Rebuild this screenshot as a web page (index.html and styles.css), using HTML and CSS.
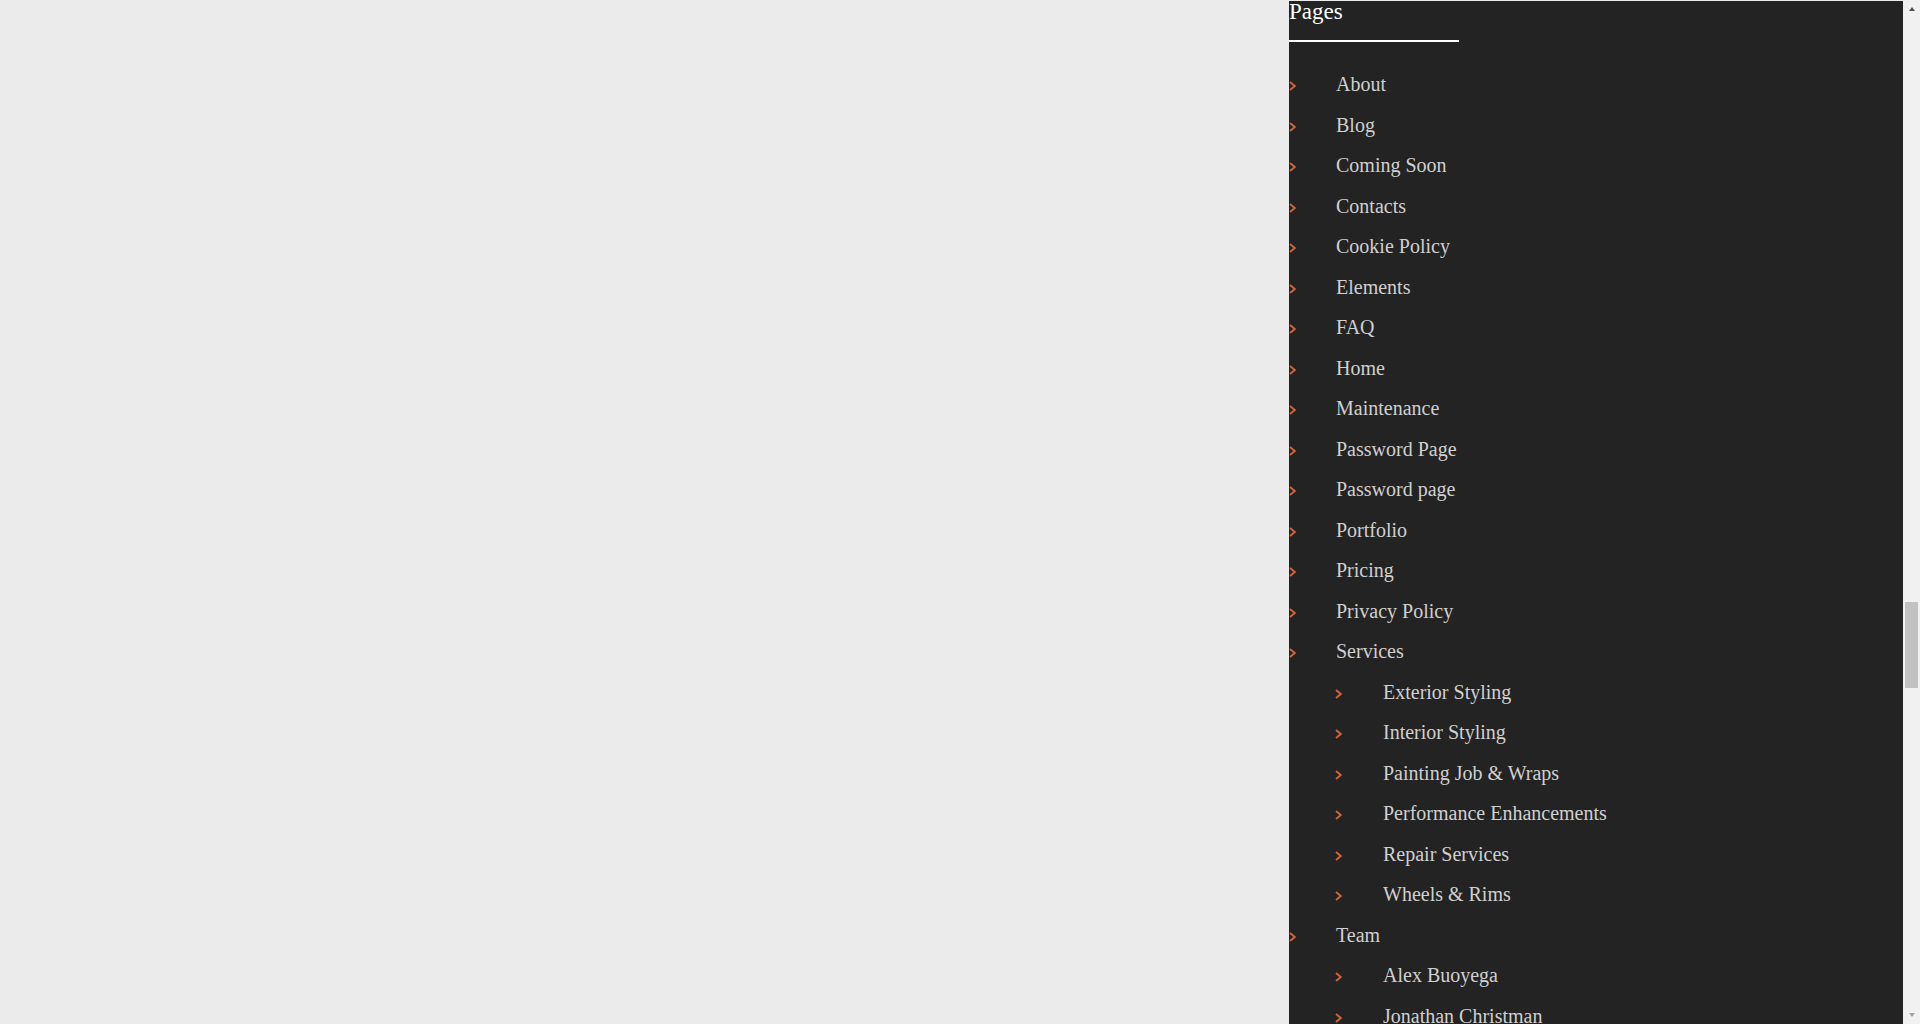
FILE: index.html
```html
<!DOCTYPE html>
<html lang="en">
<head>
<meta charset="utf-8">
<title>Pages</title>
<link rel="stylesheet" href="styles.css">
</head>
<body>
<div class="page">
  <div class="blank"></div>
  <aside class="panel">
    <h2 class="title">Pages</h2>
    <ul class="menu">
      <li><span class="mark"><svg viewBox="0 0 7 10" width="7" height="10"><polyline points="1,1 5.8,5 1,9"/></svg></span><a href="#">About</a></li>
      <li><span class="mark"><svg viewBox="0 0 7 10" width="7" height="10"><polyline points="1,1 5.8,5 1,9"/></svg></span><a href="#">Blog</a></li>
      <li><span class="mark"><svg viewBox="0 0 7 10" width="7" height="10"><polyline points="1,1 5.8,5 1,9"/></svg></span><a href="#">Coming Soon</a></li>
      <li><span class="mark"><svg viewBox="0 0 7 10" width="7" height="10"><polyline points="1,1 5.8,5 1,9"/></svg></span><a href="#">Contacts</a></li>
      <li><span class="mark"><svg viewBox="0 0 7 10" width="7" height="10"><polyline points="1,1 5.8,5 1,9"/></svg></span><a href="#">Cookie Policy</a></li>
      <li><span class="mark"><svg viewBox="0 0 7 10" width="7" height="10"><polyline points="1,1 5.8,5 1,9"/></svg></span><a href="#">Elements</a></li>
      <li><span class="mark"><svg viewBox="0 0 7 10" width="7" height="10"><polyline points="1,1 5.8,5 1,9"/></svg></span><a href="#">FAQ</a></li>
      <li><span class="mark"><svg viewBox="0 0 7 10" width="7" height="10"><polyline points="1,1 5.8,5 1,9"/></svg></span><a href="#">Home</a></li>
      <li><span class="mark"><svg viewBox="0 0 7 10" width="7" height="10"><polyline points="1,1 5.8,5 1,9"/></svg></span><a href="#">Maintenance</a></li>
      <li><span class="mark"><svg viewBox="0 0 7 10" width="7" height="10"><polyline points="1,1 5.8,5 1,9"/></svg></span><a href="#">Password Page</a></li>
      <li><span class="mark"><svg viewBox="0 0 7 10" width="7" height="10"><polyline points="1,1 5.8,5 1,9"/></svg></span><a href="#">Password page</a></li>
      <li><span class="mark"><svg viewBox="0 0 7 10" width="7" height="10"><polyline points="1,1 5.8,5 1,9"/></svg></span><a href="#">Portfolio</a></li>
      <li><span class="mark"><svg viewBox="0 0 7 10" width="7" height="10"><polyline points="1,1 5.8,5 1,9"/></svg></span><a href="#">Pricing</a></li>
      <li><span class="mark"><svg viewBox="0 0 7 10" width="7" height="10"><polyline points="1,1 5.8,5 1,9"/></svg></span><a href="#">Privacy Policy</a></li>
      <li><span class="mark"><svg viewBox="0 0 7 10" width="7" height="10"><polyline points="1,1 5.8,5 1,9"/></svg></span><a href="#">Services</a>
        <ul class="submenu">
          <li><span class="mark"><svg viewBox="0 0 7 10" width="7" height="10"><polyline points="1,1 5.8,5 1,9"/></svg></span><a href="#">Exterior Styling</a></li>
          <li><span class="mark"><svg viewBox="0 0 7 10" width="7" height="10"><polyline points="1,1 5.8,5 1,9"/></svg></span><a href="#">Interior Styling</a></li>
          <li><span class="mark"><svg viewBox="0 0 7 10" width="7" height="10"><polyline points="1,1 5.8,5 1,9"/></svg></span><a href="#">Painting Job &amp; Wraps</a></li>
          <li><span class="mark"><svg viewBox="0 0 7 10" width="7" height="10"><polyline points="1,1 5.8,5 1,9"/></svg></span><a href="#">Performance Enhancements</a></li>
          <li><span class="mark"><svg viewBox="0 0 7 10" width="7" height="10"><polyline points="1,1 5.8,5 1,9"/></svg></span><a href="#">Repair Services</a></li>
          <li><span class="mark"><svg viewBox="0 0 7 10" width="7" height="10"><polyline points="1,1 5.8,5 1,9"/></svg></span><a href="#">Wheels &amp; Rims</a></li>
        </ul>
      </li>
      <li><span class="mark"><svg viewBox="0 0 7 10" width="7" height="10"><polyline points="1,1 5.8,5 1,9"/></svg></span><a href="#">Team</a>
        <ul class="submenu">
          <li><span class="mark"><svg viewBox="0 0 7 10" width="7" height="10"><polyline points="1,1 5.8,5 1,9"/></svg></span><a href="#">Alex Buoyega</a></li>
          <li><span class="mark"><svg viewBox="0 0 7 10" width="7" height="10"><polyline points="1,1 5.8,5 1,9"/></svg></span><a href="#">Jonathan Christman</a></li>
        </ul>
      </li>
    </ul>
  </aside>
  <div class="scrollbar">
    <span class="arrow arrow-up"></span>
    <div class="track"><div class="thumb"></div></div>
    <span class="arrow arrow-down"></span>
  </div>
</div>
</body>
</html>
```

FILE: styles.css
```css
html, body {
  margin: 0;
  padding: 0;
  height: 100%;
  overflow: hidden;
  background: #ebebeb;
}

.page {
  display: flex;
  height: 1024px;
  font-family: "Liberation Serif", "Times New Roman", serif;
}

.blank {
  flex: 0 0 1289px;
  background: #ebebeb;
}

.panel {
  flex: 1 1 auto;
  margin-top: 1px;
  background: #232323;
  overflow: hidden;
}

.title {
  margin: 0;
  width: 170px;
  font-size: 23px;
  line-height: 22px;
  font-weight: normal;
  color: #ffffff;
  padding-bottom: 17px;
  border-bottom: 2px solid #ffffff;
}

.menu {
  list-style: none;
  margin: 22px 0 0 0;
  padding: 0;
}

.submenu {
  list-style: none;
  margin: 0;
  padding: 0 0 0 46px;
}

.menu li {
  font-size: 20px;
  line-height: 40.5px;
  color: #d0d0d0;
}

.menu a {
  color: #d0d0d0;
  text-decoration: none;
}

.mark {
  display: inline-block;
  width: 47px;
}

.submenu .mark {
  width: 48px;
}

.mark svg {
  display: inline-block;
  vertical-align: 0;
}

.mark polyline {
  fill: none;
  stroke: #d2643a;
  stroke-width: 1.9;
}

.scrollbar {
  flex: 0 0 17px;
  background: #f1f1f1;
  display: flex;
  flex-direction: column;
  align-items: center;
}

.track {
  flex: 1 1 auto;
  width: 100%;
}

.thumb {
  margin: 591px 0 0 2px;
  width: 13px;
  height: 86px;
  background: #c1c1c1;
}

.arrow {
  display: block;
  width: 0;
  height: 0;
  border-left: 3.5px solid transparent;
  border-right: 3.5px solid transparent;
}

.arrow-up {
  margin-top: 7px;
  border-bottom: 4px solid #505050;
}

.arrow-down {
  margin-bottom: 7px;
  border-top: 4px solid #a3a3a3;
}
```
